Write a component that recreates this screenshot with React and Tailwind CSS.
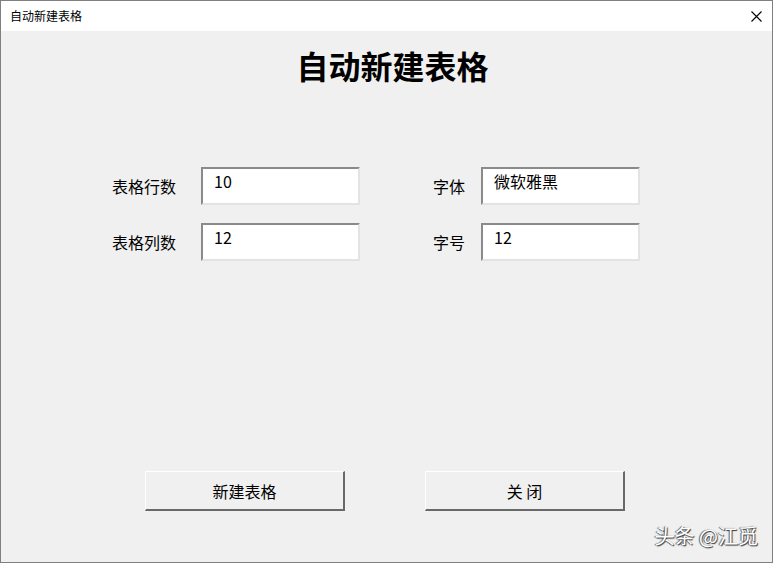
const font = { fontFamily: '"Noto Sans CJK SC", "Liberation Sans", sans-serif' }

const Field = ({ label, value, labelWidth }) => (
    <div className="flex items-center">
        <div className={`${labelWidth} text-[16px] text-black`}>{label}</div>
        <div className="w-[159px] h-[38px] bg-white border-2 border-t-[#8a8a8a] border-l-[#8a8a8a] border-b-[#e3e3e3] border-r-[#e3e3e3] pl-[11px] pt-[1px] text-[16px] leading-[22px] text-black">
            {value}
        </div>
    </div>
)

const Button = ({ children }) => (
    <div className="w-[200px] h-[40px] flex items-center justify-center bg-[#f0f0f0] border-t border-l border-t-white border-l-white border-b-2 border-r-2 border-b-[#696969] border-r-[#696969] text-[16px] text-black">
        {children}
    </div>
)

const App = () => {
    return (
        <div className="w-[773px] h-[563px] flex flex-col border border-[#7f7f7f] overflow-hidden" style={font}>
            <div className="h-[30px] bg-white flex items-center justify-between pl-[9px] pr-[10px] shrink-0">
                <span className="text-[12px] text-black">自动新建表格</span>
                <svg width="11" height="11" viewBox="0 0 11 11">
                    <path d="M0.5 0.5 L10.5 10.5 M10.5 0.5 L0.5 10.5" stroke="#000" strokeWidth="1.1" />
                </svg>
            </div>

            <div className="relative flex-1 bg-[#f0f0f0] flex flex-col">
                <h1 className="mt-[14px] h-[40px] leading-[40px] text-center text-[32px] font-bold text-black pl-[12px]">自动新建表格</h1>

                <div className="mt-[82px] flex pl-[111px] gap-[73px]">
                    <div className="flex flex-col gap-[18px]">
                        <Field label="表格行数" value="10" labelWidth="w-[89px]" />
                        <Field label="表格列数" value="12" labelWidth="w-[89px]" />
                    </div>
                    <div className="flex flex-col gap-[18px]">
                        <Field label="字体" value="微软雅黑" labelWidth="w-[48px]" />
                        <Field label="字号" value="12" labelWidth="w-[48px]" />
                    </div>
                </div>

                <div className="mt-[210px] flex pl-[144px] gap-[80px]">
                    <Button>新建表格</Button>
                    <Button>关 闭</Button>
                </div>

                <div className="absolute right-[14px] bottom-[11px] text-[20px] text-white" style={{ textShadow: '1px 1px 1px #333, -1px 0 1px #555' }}>
                    头条 @江觅
                </div>
            </div>
        </div>
    )
}

export default App
